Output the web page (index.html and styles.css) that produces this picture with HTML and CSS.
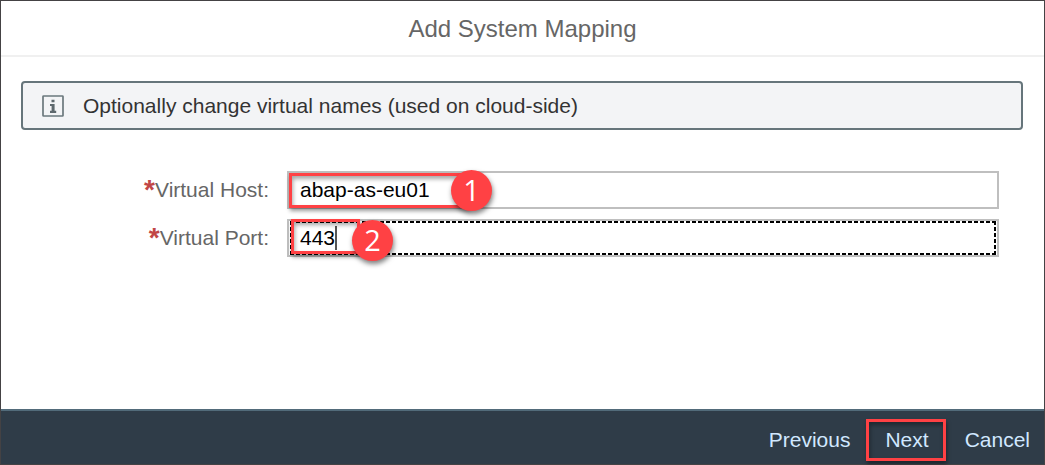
FILE: index.html
```html
<!DOCTYPE html>
<html lang="en">
<head>
<meta charset="utf-8">
<title>Add System Mapping</title>
<link rel="stylesheet" href="styles.css">
</head>
<body>
<main class="dialog">
  <header class="dialog-header"><h1 class="dialog-title">Add System Mapping</h1></header>
  <form class="dialog-body">
    <div class="message-strip">
      <svg class="info-icon" viewBox="0 0 22 22" aria-hidden="true">
        <rect x="1" y="1" width="20" height="20" rx="0.6" fill="none" stroke="#6b787d" stroke-width="1.7"/>
        <path d="M9.500 4.700h3v2.600h-3zM8 9h4.600v6.800h1.600v2.200H8v-2.200h1.600v-4.800H8z" fill="#5e696e"/>
      </svg>
      <p class="message-text">Optionally change virtual names (used on cloud-side)</p>
    </div>
    <div class="fields">
      <label class="field-label" for="host"><span class="required">*</span>Virtual Host:</label>
      <div class="field">
        <input class="field-input" id="host" type="text" value="abap-as-eu01">
        <span class="callout callout-host"></span>
        <span class="badge badge-host">1</span>
      </div>
      <label class="field-label" for="port"><span class="required">*</span>Virtual Port:</label>
      <div class="field field-focused">
        <input class="field-input" id="port" type="text" value="443">
        <span class="caret"></span>
        <span class="callout callout-port"></span>
        <span class="badge badge-port">2</span>
      </div>
    </div>
  </form>
  <footer class="dialog-footer">
    <button class="footer-button" type="button">Previous</button>
    <button class="footer-button footer-button-marked" type="button">Next</button>
    <button class="footer-button" type="button">Cancel</button>
  </footer>
</main>
</body>
</html>
```
FILE: styles.css
```css
* {
  box-sizing: border-box;
}

body {
  margin: 0;
  font-family: "Liberation Sans", Arial, sans-serif;
  font-size: 21px;
}

.dialog {
  display: flex;
  flex-direction: column;
  min-height: 100vh;
  border: 1px solid #444244;
  background: #fff;
}

.dialog-header {
  padding: 14px 20px 12px;
  border-bottom: 2px solid #f0f0f0;
  text-align: center;
}

.dialog-title {
  margin: 0;
  font-size: 24px;
  font-weight: 400;
  line-height: 28px;
  color: #666;
}

.dialog-body {
  flex: 1;
  padding: 24px 21px 24px 20px;
}

.message-strip {
  display: flex;
  align-items: center;
  gap: 19px;
  padding: 10px 19px;
  border: 2px solid #66757b;
  border-radius: 4px;
  background: #f3f4f6;
}

.info-icon {
  flex: none;
  width: 22px;
  height: 22px;
}

.message-text {
  margin: 0;
  line-height: 25px;
  color: #333;
}

.fields {
  display: grid;
  grid-template-columns: 31fr 89fr;
  gap: 10px 18px;
  align-items: center;
  padding: 41px 24px 0 0;
}

.field-label {
  text-align: right;
  line-height: 28px;
  color: #666;
}

.required {
  font-size: 28px;
  font-weight: 700;
  line-height: 20px;
  vertical-align: -2px;
  color: #c14646;
}

.field {
  position: relative;
}

.field-input {
  display: block;
  width: 100%;
  height: 38px;
  padding: 0 11px;
  border: 2px solid #bfbfbf;
  border-radius: 0;
  outline: none;
  background: #fff;
  font: inherit;
  color: #000;
}

.field-focused::after {
  content: "";
  position: absolute;
  inset: 2px 3px;
  background:
    repeating-linear-gradient(90deg, #000 0 4px, #fff 4px 6px) top / 100% 2px no-repeat,
    repeating-linear-gradient(90deg, #000 0 4px, #fff 4px 6px) bottom / 100% 2px no-repeat,
    repeating-linear-gradient(#000 0 4px, #fff 4px 6px) left / 2px 100% no-repeat,
    repeating-linear-gradient(#000 0 4px, #fff 4px 6px) right / 2px 100% no-repeat;
  pointer-events: none;
}

.caret {
  position: absolute;
  left: 48px;
  top: 7px;
  width: 2px;
  height: 24px;
  background: #555;
}

.callout {
  position: absolute;
  z-index: 1;
  height: 35px;
  border: 3px solid #ff4144;
  box-shadow: 1px 3px 4px rgba(0, 0, 0, .4), inset 1px 3px 4px rgba(0, 0, 0, .35);
  pointer-events: none;
}

.callout-host {
  left: 2px;
  top: 2px;
  width: 180px;
}

.callout-port {
  left: 4px;
  top: 0;
  width: 69px;
}

.badge {
  position: absolute;
  z-index: 2;
  width: 41px;
  height: 41px;
  border-radius: 50%;
  background: #ff4144;
  box-shadow: 1px 3px 5px rgba(0, 0, 0, .5);
  font-family: "Open Sans", sans-serif;
  font-size: 29px;
  font-weight: 500;
  line-height: 40px;
  text-align: center;
  color: #fff;
}

.badge-host {
  left: 164px;
  top: -1px;
}

.badge-port {
  left: 65px;
  top: 1px;
}

.dialog-footer {
  display: flex;
  justify-content: flex-end;
  align-items: center;
  padding: 8px 10px 3px 20px;
  border-top: 2px solid #526b7a;
  background: #2f3c48;
}

.footer-button {
  height: 42px;
  padding: 0 4px;
  border: 0;
  background: transparent;
  font: inherit;
  color: #d1e8ff;
}

.footer-button-marked {
  margin: 0 15px 0 12px;
  padding: 0 14px 0 16px;
  border: 3px solid #ff4144;
  box-shadow: 1px 3px 4px rgba(0, 0, 0, .4), inset 1px 3px 4px rgba(0, 0, 0, .35);
}
```
